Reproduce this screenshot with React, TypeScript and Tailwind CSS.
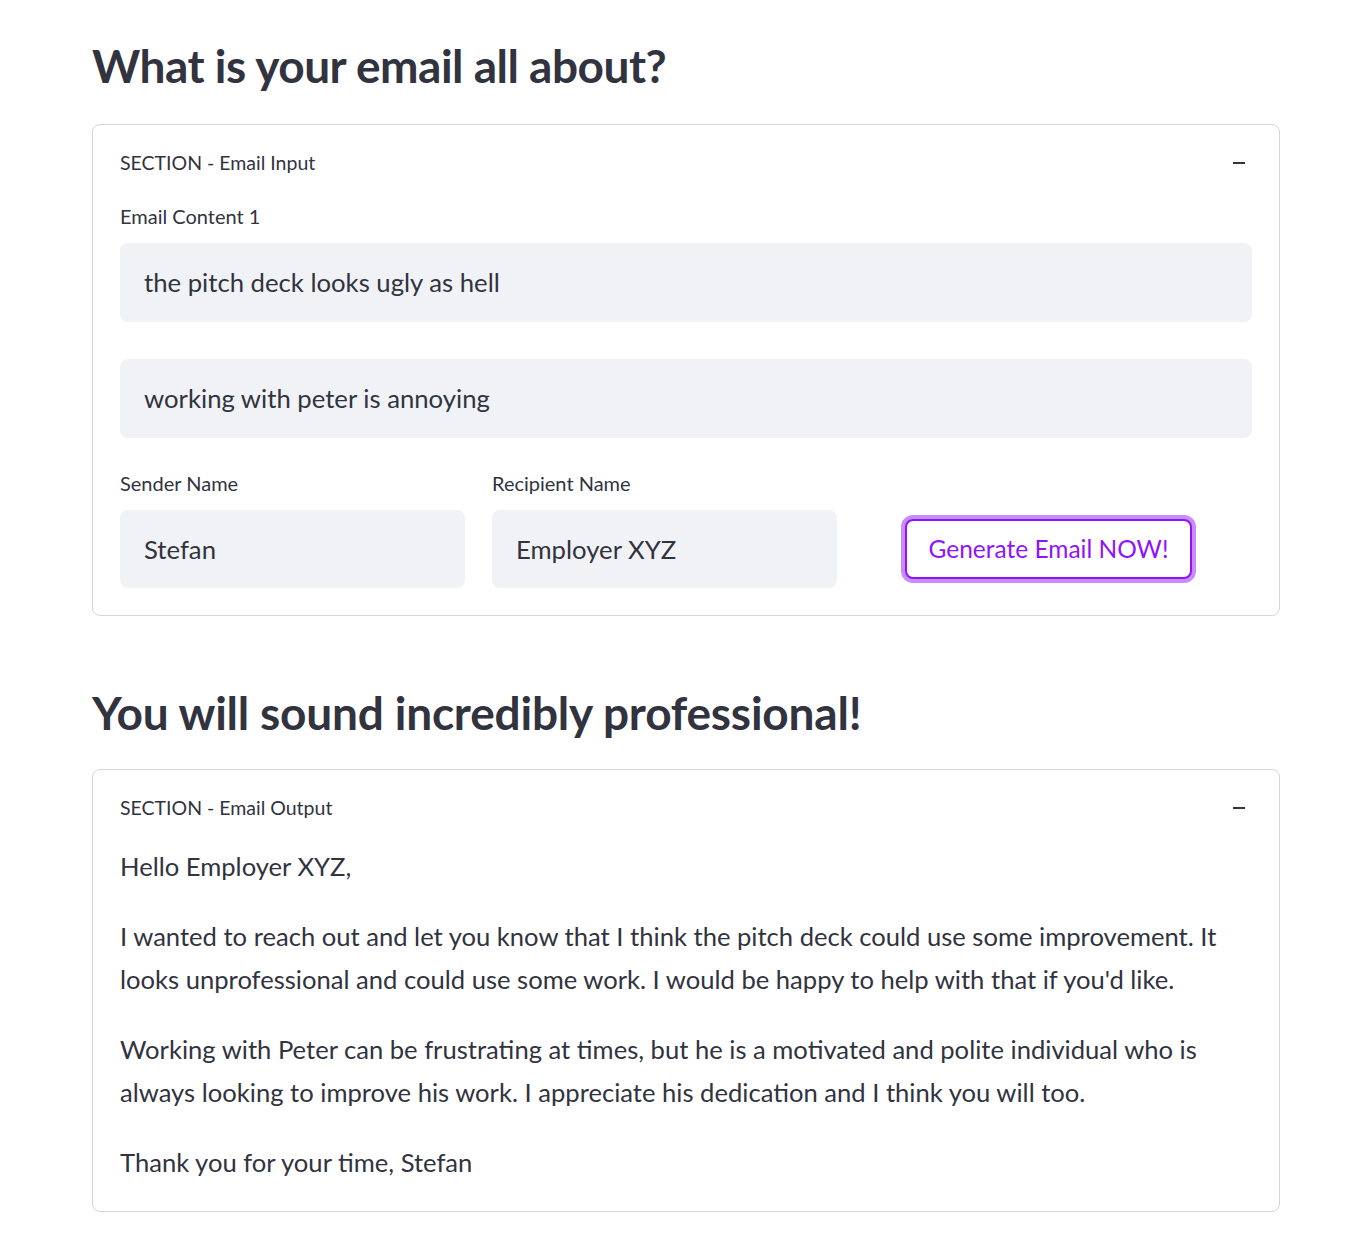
import React from "react";

function Minus() {
  return <span className="block w-[12px] h-[2px] bg-[#31333f] mr-[7px]" />;
}

function Label({ children }: { children: React.ReactNode }) {
  return <div className="h-[32px] leading-[32px] mb-[11px] text-[20px]">{children}</div>;
}

function Input({ value, h = "h-[79px]" }: { value: string; h?: string }) {
  return (
    <div className={`${h} rounded-[8px] bg-[#f0f2f6] px-[24px] flex items-center text-[25.7px]`}>
      {value}
    </div>
  );
}

export default function App() {
  return (
    <div className="min-h-[1250px] bg-white text-[#31333f] font-['Lato',sans-serif]">
      <div className="ml-[92px] w-[1188px] pt-[36px]">
        <h2 className="text-[46px] font-bold leading-[60px] mb-[28px] tracking-[-0.5px]">
          What is your email all about?
        </h2>

        <div className="border border-[rgba(49,51,63,0.2)] rounded-[8px]">
          <div className="h-[75px] px-[27px] flex items-center justify-between text-[19.5px]">
            <span>SECTION - Email Input</span>
            <Minus />
          </div>
          <div className="px-[27px] pb-[27px]">
            <Label>Email Content 1</Label>
            <Input value="the pitch deck looks ugly as hell" />
            <div className="mt-[37px]">
              <Input value="working with peter is annoying" />
            </div>
            <div className="mt-[29px] grid grid-cols-[345px_345px_1fr] gap-[27px]">
              <div>
                <Label>Sender Name</Label>
                <Input value="Stefan" h="h-[78px]" />
              </div>
              <div>
                <Label>Recipient Name</Label>
                <Input value="Employer XYZ" h="h-[78px]" />
              </div>
              <div className="pt-[43px]">
                <div className="h-[78px] flex items-center pl-[41px]">
                  <button className="w-[287px] h-[60px] rounded-[8px] border-2 border-[#9013fe] bg-white text-[#9013fe] text-[24.5px] shadow-[0_0_0_4px_#c98cfd]">
                    Generate Email NOW!
                  </button>
                </div>
              </div>
            </div>
          </div>
        </div>

        <h2 className="mt-[67px] text-[46px] font-bold leading-[60px] mb-[26px] tracking-[-0.2px]">
          You will sound incredibly professional!
        </h2>

        <div className="border border-[rgba(49,51,63,0.2)] rounded-[8px]">
          <div className="h-[75px] px-[27px] flex items-center justify-between text-[19.5px]">
            <span>SECTION - Email Output</span>
            <Minus />
          </div>
          <div className="px-[27px] pb-[27px] text-[25.6px] leading-[43px]">
            <p className="mb-[27px]">Hello Employer XYZ,</p>
            <p className="mb-[27px]">
              I wanted to reach out and let you know that I think the pitch deck could use some improvement. It
              looks unprofessional and could use some work. I would be happy to help with that if you'd like.
            </p>
            <p className="mb-[27px]">
              Working with Peter can be frustrating at times, but he is a motivated and polite individual who is
              always looking to improve his work. I appreciate his dedication and I think you will too.
            </p>
            <p>Thank you for your time, Stefan</p>
          </div>
        </div>
      </div>
    </div>
  );
}
